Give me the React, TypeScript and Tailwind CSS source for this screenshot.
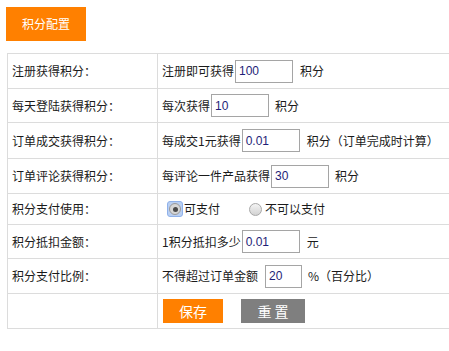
import React from "react";

const cjk = "font-['Noto_Sans_CJK_SC','Noto_Sans',sans-serif]";

function Input({ value, w = "w-[58px]" }: { value: string; w?: string }) {
  return (
    <div
      className={`${w} h-[23px] border border-[#a5a5a5] bg-white flex items-center pl-[3px] text-[12px] text-[#1e1e78] font-['Liberation_Sans',Arial,sans-serif]`}
    >
      {value}
    </div>
  );
}

function Row({
  label,
  h,
  children,
}: {
  label: string;
  h: string;
  children: React.ReactNode;
}) {
  return (
    <div className={`flex ${h} border-b border-[#dcdcdc]`}>
      <div className="w-[150px] shrink-0 border-r border-[#dcdcdc] flex items-center pl-[4px]">
        {label}
      </div>
      <div className="flex-1 flex items-center pl-[4px] whitespace-nowrap">{children}</div>
    </div>
  );
}

export default function App() {
  return (
    <div className={`w-[449px] h-[351px] bg-white overflow-hidden ${cjk} text-[12px] text-[#1a1a1a] leading-none`}>
      <div className="pt-[7px] pl-[6px]">
        <div className="w-[80px] h-[34px] bg-[#ff8000] text-white flex items-center justify-center text-[12px]">
          积分配置
        </div>
      </div>
      <div className="mt-[12px] ml-[7px] w-[450px] border-t border-l border-[#dcdcdc]">
        <Row label="注册获得积分：" h="h-[35px]">
          <span>注册即可获得</span>
          <span className="ml-[1px]"><Input value="100" /></span>
          <span className="ml-[7px]">积分</span>
        </Row>
        <Row label="每天登陆获得积分：" h="h-[34px]">
          <span>每次获得</span>
          <span className="ml-[1px]"><Input value="10" /></span>
          <span className="ml-[6px]">积分</span>
        </Row>
        <Row label="订单成交获得积分：" h="h-[36px]">
          <span>每成交1元获得</span>
          <span className="ml-[1px]"><Input value="0.01" /></span>
          <span className="ml-[7px]">积分（订单完成时计算）</span>
        </Row>
        <Row label="订单评论获得积分：" h="h-[35px]">
          <span>每评论一件产品获得</span>
          <span className="ml-[1px]"><Input value="30" /></span>
          <span className="ml-[6px]">积分</span>
        </Row>
        <Row label="积分支付使用：" h="h-[31px]">
          <span className="ml-[5px] w-[16px] h-[16px] rounded-[3px] bg-[#b9cff2] border border-[#8fb1ea] flex items-center justify-center">
            <span className="w-[12px] h-[12px] rounded-full border border-[#9a9a9a] bg-[#d6d6d6] flex items-center justify-center">
              <span className="w-[5px] h-[5px] rounded-full bg-[#4a4a4a]" />
            </span>
          </span>
          <span className="ml-[1px]">可支付</span>
          <span className="ml-[29px] w-[13px] h-[13px] rounded-full border border-[#a8a8a8] bg-gradient-to-b from-[#f4f4f4] to-[#d2d2d2]" />
          <span className="ml-[3px]">不可以支付</span>
        </Row>
        <Row label="积分抵扣金额：" h="h-[34px]">
          <span>1积分抵扣多少</span>
          <span className="ml-[1px]"><Input value="0.01" /></span>
          <span className="ml-[7px]">元</span>
        </Row>
        <Row label="积分支付比例：" h="h-[35px]">
          <span>不得超过订单金额</span>
          <span className="ml-[7px]"><Input value="20" w="w-[37px]" /></span>
          <span className="ml-[6px]">%（百分比）</span>
        </Row>
        <Row label="" h="h-[35px]">
          <div className="ml-[1px] w-[60px] h-[24px] bg-[#ff8000] text-white text-[14px] flex items-center justify-center">
            保存
          </div>
          <div className="ml-[18px] w-[64px] h-[24px] bg-[#7f7f7f] text-white text-[14px] flex items-center justify-center">
            重&nbsp;置
          </div>
        </Row>
      </div>
    </div>
  );
}
